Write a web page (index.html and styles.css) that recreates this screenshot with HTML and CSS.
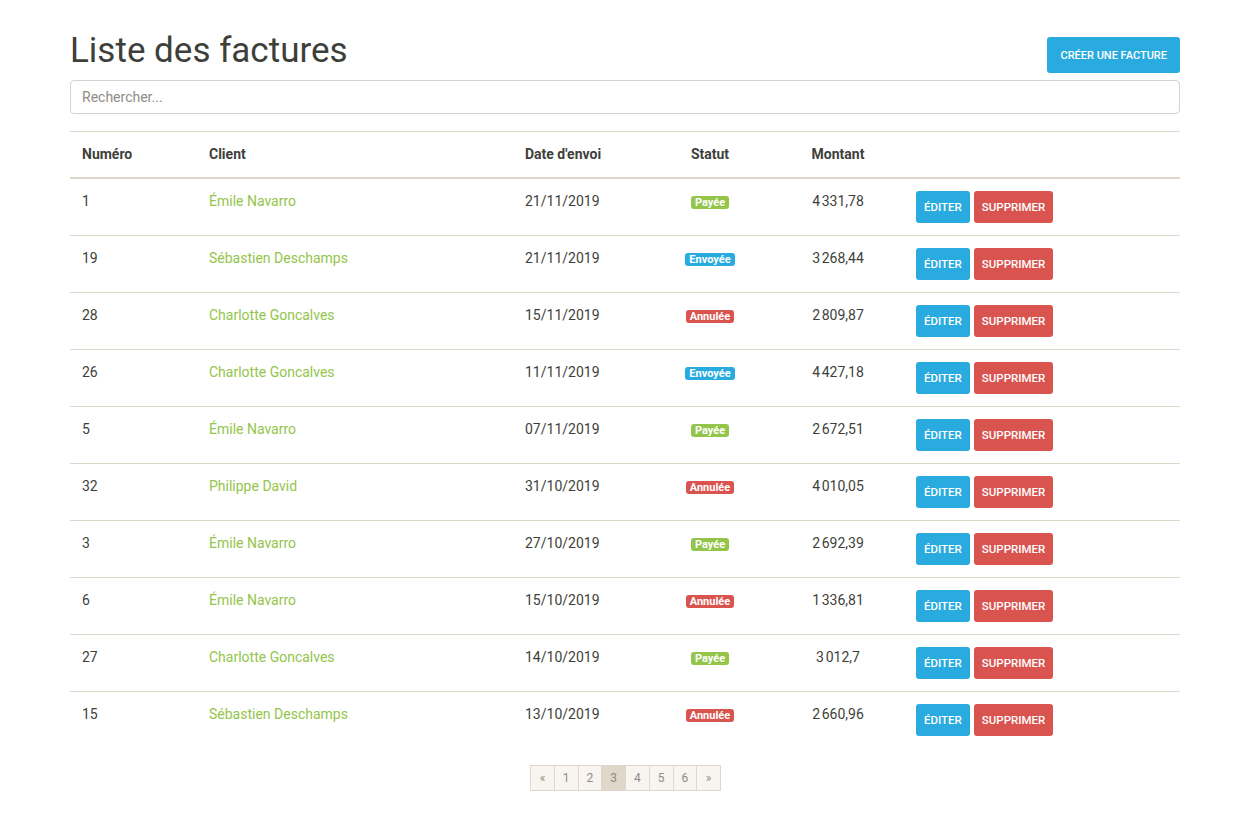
FILE: index.html
```html
<!DOCTYPE html>
<html lang="fr">
<head>
<meta charset="utf-8">
<title>Liste des factures</title>
<link rel="stylesheet" href="styles.css">
</head>
<body>
<div class="container">
  <div class="header">
    <h1 class="title">Liste des factures</h1>
    <a class="btn btn-info btn-create" href="#">Créer une facture</a>
  </div>
  <input class="search" type="text" placeholder="Rechercher...">
  <table class="table">
    <colgroup>
      <col class="c1"><col class="c2"><col class="c3"><col class="c4"><col class="c5"><col class="c6">
    </colgroup>
    <thead>
      <tr><th>Numéro</th><th>Client</th><th>Date d'envoi</th><th class="center">Statut</th><th class="center">Montant</th><th></th></tr>
    </thead>
    <tbody>
      <tr><td>1</td><td><a href="#">Émile Navarro</a></td><td>21/11/2019</td><td class="center"><span class="badge paid">Payée</span></td><td class="center">4&#8239;331,78</td><td class="actions"><a class="btn btn-info" href="#">Éditer</a> <a class="btn btn-danger" href="#">Supprimer</a></td></tr>
      <tr><td>19</td><td><a href="#">Sébastien Deschamps</a></td><td>21/11/2019</td><td class="center"><span class="badge sent">Envoyée</span></td><td class="center">3&#8239;268,44</td><td class="actions"><a class="btn btn-info" href="#">Éditer</a> <a class="btn btn-danger" href="#">Supprimer</a></td></tr>
      <tr><td>28</td><td><a href="#">Charlotte Goncalves</a></td><td>15/11/2019</td><td class="center"><span class="badge cancel">Annulée</span></td><td class="center">2&#8239;809,87</td><td class="actions"><a class="btn btn-info" href="#">Éditer</a> <a class="btn btn-danger" href="#">Supprimer</a></td></tr>
      <tr><td>26</td><td><a href="#">Charlotte Goncalves</a></td><td>11/11/2019</td><td class="center"><span class="badge sent">Envoyée</span></td><td class="center">4&#8239;427,18</td><td class="actions"><a class="btn btn-info" href="#">Éditer</a> <a class="btn btn-danger" href="#">Supprimer</a></td></tr>
      <tr><td>5</td><td><a href="#">Émile Navarro</a></td><td>07/11/2019</td><td class="center"><span class="badge paid">Payée</span></td><td class="center">2&#8239;672,51</td><td class="actions"><a class="btn btn-info" href="#">Éditer</a> <a class="btn btn-danger" href="#">Supprimer</a></td></tr>
      <tr><td>32</td><td><a href="#">Philippe David</a></td><td>31/10/2019</td><td class="center"><span class="badge cancel">Annulée</span></td><td class="center">4&#8239;010,05</td><td class="actions"><a class="btn btn-info" href="#">Éditer</a> <a class="btn btn-danger" href="#">Supprimer</a></td></tr>
      <tr><td>3</td><td><a href="#">Émile Navarro</a></td><td>27/10/2019</td><td class="center"><span class="badge paid">Payée</span></td><td class="center">2&#8239;692,39</td><td class="actions"><a class="btn btn-info" href="#">Éditer</a> <a class="btn btn-danger" href="#">Supprimer</a></td></tr>
      <tr><td>6</td><td><a href="#">Émile Navarro</a></td><td>15/10/2019</td><td class="center"><span class="badge cancel">Annulée</span></td><td class="center">1&#8239;336,81</td><td class="actions"><a class="btn btn-info" href="#">Éditer</a> <a class="btn btn-danger" href="#">Supprimer</a></td></tr>
      <tr><td>27</td><td><a href="#">Charlotte Goncalves</a></td><td>14/10/2019</td><td class="center"><span class="badge paid">Payée</span></td><td class="center">3&#8239;012,7</td><td class="actions"><a class="btn btn-info" href="#">Éditer</a> <a class="btn btn-danger" href="#">Supprimer</a></td></tr>
      <tr><td>15</td><td><a href="#">Sébastien Deschamps</a></td><td>13/10/2019</td><td class="center"><span class="badge cancel">Annulée</span></td><td class="center">2&#8239;660,96</td><td class="actions"><a class="btn btn-info" href="#">Éditer</a> <a class="btn btn-danger" href="#">Supprimer</a></td></tr>
    </tbody>
  </table>
  <div class="pager">
    <ul class="pagination">
      <li class="page-item"><a class="page-link" href="#">&laquo;</a></li>
      <li class="page-item"><a class="page-link" href="#">1</a></li>
      <li class="page-item"><a class="page-link" href="#">2</a></li>
      <li class="page-item active"><a class="page-link" href="#">3</a></li>
      <li class="page-item"><a class="page-link" href="#">4</a></li>
      <li class="page-item"><a class="page-link" href="#">5</a></li>
      <li class="page-item"><a class="page-link" href="#">6</a></li>
      <li class="page-item"><a class="page-link" href="#">&raquo;</a></li>
    </ul>
  </div>
</div>
</body>
</html>
```

FILE: styles.css
```css
* { box-sizing: border-box; }
html, body { margin: 0; padding: 0; background: #fff; }
body {
  font-family: Roboto, "Liberation Sans", Arial, sans-serif;
  font-size: 14px;
  line-height: 1.5;
  color: #3e3f3a;
}
.container {
  width: 1110px;
  margin: 0 0 0 70px;
  padding-top: 30px;
}
.header {
  display: flex;
  justify-content: space-between;
  align-items: flex-start;
  height: 43px;
  margin-bottom: 7px;
}
.title {
  margin: 0;
  font-size: 35px;
  font-weight: 400;
  line-height: 1.2;
  color: #3e3f3a;
}
.btn {
  display: inline-block;
  text-decoration: none;
  color: #fff;
  text-transform: uppercase;
  font-weight: 500;
  border-radius: 3px;
  white-space: nowrap;
  vertical-align: top;
}
.btn-info { background: #29abe0; }
.btn-danger { background: #d9534f; }
.btn-create {
  margin-top: 7px;
  height: 36px;
  line-height: 37px;
  padding: 0 13px;
  font-size: 11px;
}
.search {
  display: block;
  width: 100%;
  height: 34px;
  padding: 0 11px;
  border: 1px solid #ced4da;
  border-radius: 4px;
  font-family: inherit;
  font-size: 14px;
  color: #3e3f3a;
  outline: none;
  margin-bottom: 17px;
}
.search::placeholder { color: #8e8c84; }
.table {
  width: 100%;
  border-collapse: collapse;
  table-layout: fixed;
  margin-bottom: 17px;
}
.c1 { width: 127px; }
.c2 { width: 316px; }
.c3 { width: 135px; }
.c4 { width: 124px; }
.c5 { width: 132px; }
.c6 { width: 276px; }
.table th, .table td {
  padding: 12px;
  text-align: left;
  vertical-align: top;
  border-top: 1px solid #dfd7ca;
}
.table th { font-weight: 700; }
.table thead th { border-bottom: 2px solid #dfd7ca; }
.table tbody tr:first-child td { border-top: 0; }
.table .center { text-align: center; }
.table td a { color: #93c54b; text-decoration: none; }
.table td.actions { font-size: 0; }
.table td.actions .btn {
  height: 32px;
  line-height: 33px;
  padding: 0 8px;
  font-size: 11.5px;
  color: #fff;
  margin-right: 4px;
}
.badge {
  display: inline-block;
  padding: 0 4px;
  font-size: 11px;
  font-weight: 700;
  line-height: 13px;
  color: #fff;
  border-radius: 3px;
  vertical-align: 0;
}
.paid { background: #93c54b; }
.sent { background: #29abe0; }
.cancel { background: #d9534f; }
.pager { display: flex; justify-content: center; padding-left: 1px; }
.pagination {
  display: flex;
  list-style: none;
  margin: 0;
  padding: 0;
}
.page-item + .page-item { margin-left: -1px; }
.page-link {
  display: block;
  padding: 4px 8px;
  font-size: 12px;
  line-height: 16px;
  height: 26px;
  min-width: 24.5px;
  text-align: center;
  color: #8e8c84;
  background: #f8f5f0;
  border: 1px solid #dfd7ca;
  text-decoration: none;
}
.page-item.active .page-link { background: #dfd7ca; color: #8e8c84; }
```
